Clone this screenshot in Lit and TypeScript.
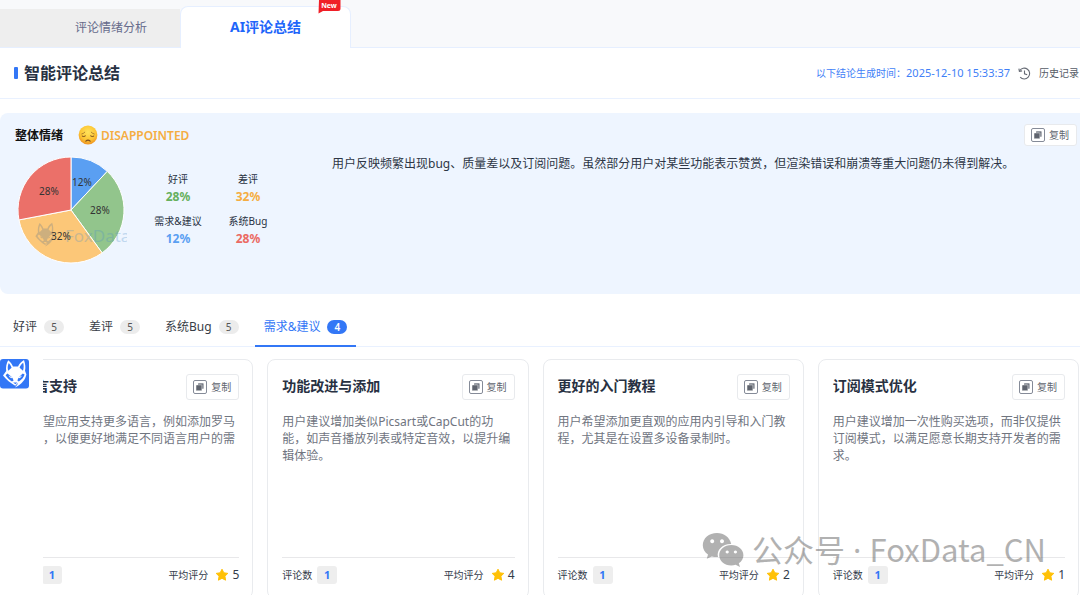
import { LitElement, html, css, svg } from "lit";
import { customElement, property, state } from "lit/decorators.js";

interface Slice {
  label: string;
  percent: number;
  fill: string;
  tone: string;
  x: number;
  y: number;
}

interface Review {
  title: string;
  body: string;
  count: number;
  score: number;
}

const SLICES: Slice[] = [
  { label: "需求&建议", percent: 12, fill: "#5a9ff2", tone: "blue", x: 64, y: 30 },
  { label: "好评", percent: 28, fill: "#92c58c", tone: "green", x: 82, y: 58 },
  { label: "差评", percent: 32, fill: "#fcc778", tone: "orange", x: 43, y: 84 },
  { label: "系统Bug", percent: 28, fill: "#eb7069", tone: "red", x: 31, y: 39 },
];

const LEGEND = [SLICES[1], SLICES[2], SLICES[0], SLICES[3]];

const TABS = [
  { label: "好评", count: 5 },
  { label: "差评", count: 5 },
  { label: "系统Bug", count: 5 },
  { label: "需求&建议", count: 4 },
];

const REVIEWS: Review[] = [
  {
    title: "多语言支持",
    body: "用户希望应用支持更多语言，例如添加罗马尼亚语，以便更好地满足不同语言用户的需求。",
    count: 1,
    score: 5,
  },
  {
    title: "功能改进与添加",
    body: "用户建议增加类似Picsart或CapCut的功能，如声音播放列表或特定音效，以提升编辑体验。",
    count: 1,
    score: 4,
  },
  {
    title: "更好的入门教程",
    body: "用户希望添加更直观的应用内引导和入门教程，尤其是在设置多设备录制时。",
    count: 1,
    score: 2,
  },
  {
    title: "订阅模式优化",
    body: "用户建议增加一次性购买选项，而非仅提供订阅模式，以满足愿意长期支持开发者的需求。",
    count: 1,
    score: 1,
  },
];

const foxShape = svg`
  <path fill-rule="evenodd" d="M8.2 1.2 C10.6 3.2 12.2 5.3 13 7.6 L18 7.6 C19 5 21 2.8 24 1
    C25.4 5 25.8 8.6 25 11.8 L26.4 15.6 C25.4 20.6 22 25.2 15 28.6 C16.4 26.9 17.6 25.6 18.2 23.8
    L15.2 26.8 C10.4 24 6.4 20.8 3 16.6 L6.2 12 C5.6 8.4 6.4 4.4 8.2 1.2 Z
    M8.8 4 C7.6 6.8 7.5 9.4 8.2 11.8 L11.6 8.8 C11 7 10 5.4 8.8 4 Z
    M23.2 3.8 C21.4 5.2 20.2 6.8 19.6 8.8 L23 11.8 C23.9 9.2 23.9 6.4 23.2 3.8 Z
    M5.6 16.2 C7.2 18.8 9.4 20.8 12 22.4 L13.6 21.4 C12.8 18.6 10 16.6 7.4 14.6 Z
    M24.6 15.4 L22.8 14.4 C20.6 16.4 18 18.6 17.4 21.4 L18.8 22.4 C21.6 20.6 23.8 18.4 24.6 15.4 Z
    M13.2 23.4 L15.4 25.2 L17.4 23.4 Z"></path>
  <path d="M8.6 16.6 L12.4 18.4 L11.4 19.3 Q9.4 18.6 8.6 16.6 Z M22 16.6 L18.4 18.4 L19.4 19.3 Q21.2 18.6 22 16.6 Z"></path>`;

@customElement("copy-button")
class CopyButton extends LitElement {
  @property({ type: Boolean, reflect: true }) compact = false;

  static styles = css`
    :host {
      display: block;
      flex: none;
    }
    .copy {
      box-sizing: border-box;
      display: flex;
      align-items: center;
      gap: 4px;
      height: 26px;
      padding: 0 7px 0 6px;
      border: 1px solid #e8eaed;
      border-radius: 3px;
      background: #fff;
      color: #61666f;
      font: 10px/16px "Noto Sans", "Noto Sans CJK SC", sans-serif;
      cursor: pointer;
    }
    :host([compact]) .copy {
      height: 22px;
    }
    .icon {
      display: block;
      width: 14px;
      height: 14px;
    }
  `;

  render() {
    return html`<button class="copy" type="button">
      <svg class="icon" viewBox="0 0 14 14" aria-hidden="true">
        <rect x="0.5" y="0.5" width="13" height="13" rx="1.5" fill="#fff" stroke="#858b98"></rect>
        <rect x="5" y="3.2" width="5.6" height="5.6" rx="0.6" fill="#767b85"></rect>
        <rect x="3" y="4.9" width="5.9" height="5.9" rx="0.6" fill="#5f646e" stroke="#fff" stroke-width="0.5"></rect>
      </svg>
      <span>复制</span>
    </button>`;
  }
}

@customElement("sentiment-pie")
class SentimentPie extends LitElement {
  static styles = css`
    :host {
      display: block;
      flex: none;
    }
    .pie {
      display: block;
      width: 109px;
      height: 110px;
    }
    .value {
      fill: #333;
      font: 10px "Noto Sans", sans-serif;
      text-anchor: middle;
    }
    .mark {
      fill: #4b8fc9;
      opacity: 0.28;
      font: 17px "Noto Sans", sans-serif;
    }
    .fox {
      fill: #6d7d8c;
      opacity: 0.32;
    }
  `;

  render() {
    const cx = 53;
    const cy = 54;
    const r = 53;
    let turned = 0;
    const point = (share: number) => {
      const a = share * Math.PI * 2;
      return `${(cx + r * Math.sin(a)).toFixed(2)} ${(cy - r * Math.cos(a)).toFixed(2)}`;
    };
    const wedges = SLICES.map((s) => {
      const from = point(turned);
      turned += s.percent / 100;
      return svg`<path fill=${s.fill} stroke="#fff" stroke-width="1"
        d=${`M${cx} ${cy} L${from} A${r} ${r} 0 0 1 ${point(turned)} Z`}></path>`;
    });
    return html`<svg class="pie" viewBox="0 0 109 110" role="img" aria-label="整体情绪">
      ${wedges}
      <g class="fox" transform="translate(15 66) scale(0.8 0.86)">${foxShape}</g>
      <text class="mark" x="47" y="86">FoxData</text>
      ${SLICES.map((s) => svg`<text class="value" x=${s.x} y=${s.y}>${s.percent}%</text>`)}
    </svg>`;
  }
}

@customElement("review-card")
class ReviewCard extends LitElement {
  @property({ attribute: false }) review!: Review;

  static styles = css`
    :host {
      display: block;
      min-width: 0;
    }
    .card {
      padding: 14px 13px 14px 14px;
      border: 1px solid #e9ebee;
      border-radius: 8px;
      background: #fff;
    }
    .head,
    .foot,
    .stat {
      display: flex;
      align-items: center;
    }
    .head,
    .foot {
      justify-content: space-between;
    }
    .title {
      margin: 0;
      padding-bottom: 2px;
      color: #283142;
      font-size: 14px;
      line-height: 20px;
      font-weight: 700;
    }
    .body {
      min-height: 144px;
      margin: 13px 0 0;
      color: #70757f;
      font-size: 12px;
      line-height: 17px;
    }
    .foot {
      padding-top: 8px;
      border-top: 1px solid #e8e8ea;
      color: #333b4a;
      font-size: 10px;
      line-height: 18px;
    }
    .stat {
      gap: 5px;
    }
    .count {
      width: 20px;
      border-radius: 3px;
      background: #eee;
      color: #3377f6;
      font-size: 11px;
      font-weight: 700;
      text-align: center;
    }
    .rate {
      gap: 3px;
    }
    .star {
      display: block;
      width: 14px;
      height: 14px;
      margin-left: 4px;
    }
    .score {
      font-size: 12px;
    }
  `;

  render() {
    const { title, body, count, score } = this.review;
    return html`<article class="card">
      <div class="head">
        <h3 class="title">${title}</h3>
        <copy-button></copy-button>
      </div>
      <p class="body">${body}</p>
      <div class="foot">
        <div class="stat"><span>评论数</span><span class="count">${count}</span></div>
        <div class="stat rate">
          <span>平均评分</span>
          <svg class="star" viewBox="0 0 14 14" aria-hidden="true">
            <path
              d="M7 1.2 L8.8 4.8 L12.8 5.4 L9.9 8.2 L10.6 12.2 L7 10.3 L3.4 12.2 L4.1 8.2 L1.2 5.4 L5.2 4.8 Z"
              fill="#ffc107" stroke="#ffc107" stroke-width="1" stroke-linejoin="round"></path>
          </svg>
          <span class="score">${score}</span>
        </div>
      </div>
    </article>`;
  }
}

@customElement("app-root")
class AppRoot extends LitElement {
  @state() private active = 3;

  static styles = css`
    :host {
      display: block;
      position: relative;
      height: 100vh;
      overflow: hidden;
      background: #fff;
      color: #283142;
      font: 12px/17px "Noto Sans", "Noto Sans CJK SC", sans-serif;
    }
    button {
      margin: 0;
      border: 0;
      background: none;
      color: inherit;
      font: inherit;
      cursor: pointer;
    }
    .views {
      display: flex;
      align-items: flex-end;
      height: 47px;
      border-bottom: 1px solid #e6efff;
      background: #f8f9fb;
    }
    .view {
      height: 38px;
      padding: 0 33px 2px 75px;
      background: #eee;
      color: #666b8b;
    }
    .view.current {
      position: relative;
      box-sizing: border-box;
      width: 171px;
      height: 42px;
      margin-bottom: -1px;
      padding: 0 0 2px;
      border: 1px solid #e6efff;
      border-bottom: 0;
      border-radius: 8px 8px 0 0;
      background: #fff;
      color: #1f66fa;
      font-size: 14px;
      font-weight: 700;
    }
    .fresh {
      position: absolute;
      top: -7px;
      right: 9px;
      width: 23px;
      height: 14px;
    }
    .fresh-text {
      fill: #fff;
      font: 700 7px "Noto Sans", sans-serif;
      text-anchor: middle;
    }
    .header {
      display: flex;
      align-items: center;
      justify-content: space-between;
      height: 50px;
      padding: 0 1px 0 14px;
      border-bottom: 1px solid #e9f1ff;
    }
    .heading {
      display: flex;
      align-items: center;
      gap: 6px;
      margin: 0;
      font-size: 16px;
      line-height: 24px;
    }
    .heading::before {
      content: "";
      width: 4px;
      height: 12px;
      border-radius: 1px;
      background: #3377f6;
    }
    .meta {
      display: flex;
      align-items: center;
      gap: 8px;
      color: #555b66;
      font-size: 10px;
    }
    .made {
      color: #3f7ff7;
    }
    .time {
      font-size: 11px;
    }
    .history {
      display: flex;
      align-items: center;
      gap: 8px;
      padding: 0;
    }
    .clock {
      display: block;
      width: 13px;
      height: 13px;
    }
    .summary {
      display: flex;
      align-items: flex-start;
      box-sizing: border-box;
      min-height: 181px;
      margin: 14px 0 0;
      padding: 11px 3px 16px 15px;
      border-radius: 8px 0 0 8px;
      background: #eef5ff;
    }
    .mood {
      flex: none;
      width: 317px;
    }
    .mood-head {
      display: flex;
      align-items: center;
      height: 22px;
      color: #111;
      font-weight: 700;
    }
    .emoji {
      display: block;
      width: 20px;
      height: 20px;
      margin: 0 3px 0 15px;
    }
    .verdict {
      color: #f5ad42;
      font-weight: 600;
    }
    .mood-body {
      display: flex;
      padding: 10px 0 0 3px;
    }
    .legend {
      display: grid;
      grid-template-columns: 70px 70px;
      gap: 8px 0;
      align-content: start;
      margin: 0;
      padding: 15px 0 0 16px;
      text-align: center;
    }
    .name {
      font-size: 10px;
    }
    .share {
      margin: 0;
      font-weight: 700;
    }
    .blue {
      color: #5a9ff2;
    }
    .green {
      color: #66b05e;
    }
    .orange {
      color: #f5ad42;
    }
    .red {
      color: #eb6a63;
    }
    .digest {
      flex: 1;
      margin: 31px 0 0;
      color: #2d3645;
    }
    .groups {
      display: flex;
      gap: 7px;
      height: 40px;
      padding: 12px 0 0 4px;
      border-bottom: 1px solid #e9f1ff;
    }
    .group {
      display: flex;
      align-items: center;
      gap: 7px;
      height: 41px;
      padding: 2px 9px 0;
      border-bottom: 2px solid transparent;
      box-sizing: border-box;
      color: #383d46;
    }
    .group.current {
      border-bottom-color: #3377f6;
      color: #3377f6;
    }
    .pill {
      width: 20px;
      border-radius: 7px;
      background: #ececec;
      color: #555;
      font-size: 10px;
      line-height: 14px;
      text-align: center;
    }
    .current .pill {
      background: #3377f6;
      color: #fff;
      font-weight: 600;
    }
    .board {
      position: relative;
      margin-top: 12px;
    }
    .cards {
      display: grid;
      grid-template-columns: repeat(4, minmax(0, 1fr));
      gap: 14px;
      margin: 0 1px 0 -8px;
    }
    .dock {
      position: absolute;
      top: 0;
      bottom: 0;
      left: 0;
      width: 43px;
      background: #fff;
    }
    .logo {
      display: block;
      width: 29px;
      height: 30px;
    }
    .stamp {
      position: absolute;
      right: 34px;
      bottom: 23px;
      display: flex;
      align-items: center;
      gap: 8px;
      color: #666;
      opacity: 0.5;
      font: 31px/44px "Noto Sans CJK SC", sans-serif;
      pointer-events: none;
    }
    .dot {
      font-family: "Noto Sans", sans-serif;
      white-space: pre;
    }
    .chat {
      display: block;
      width: 42px;
      height: 36px;
    }
  `;

  render() {
    return html`
      <nav class="views">
        <button class="view" type="button">评论情绪分析</button>
        <button class="view current" type="button">
          AI评论总结
          <svg class="fresh" viewBox="0 0 23 14" aria-hidden="true">
            <path d="M1 0 H22.5 V8.5 Q22.5 11 20 11 H5 L0.5 13.5 Z" fill="#f01f27"></path>
            <text class="fresh-text" x="11" y="8">New</text>
          </svg>
        </button>
      </nav>

      <header class="header">
        <h2 class="heading">智能评论总结</h2>
        <div class="meta">
          <span class="made">以下结论生成时间：<span class="time">2025-12-10 15:33:37</span></span>
          <button class="history" type="button">
            <svg class="clock" viewBox="0 0 13 13" fill="none" stroke="#656a74" stroke-width="1.1" aria-hidden="true">
              <path d="M1.6 3.8 A5.4 5.4 0 1 1 2.2 10.1"></path>
              <path d="M0.9 1.6 L1.4 4.3 L4.1 3.9"></path>
              <path d="M6.5 3.5 V6.8 L9.2 7.8"></path>
            </svg>
            <span>历史记录</span>
          </button>
        </div>
      </header>

      <section class="summary">
        <div class="mood">
          <div class="mood-head">
            <span>整体情绪</span>
            <svg class="emoji" viewBox="0 0 20 20" aria-hidden="true">
              <defs>
                <radialGradient id="skin" cx="0.5" cy="0.35" r="0.65">
                  <stop offset="0" stop-color="#ffe35c"></stop>
                  <stop offset="0.65" stop-color="#fcc433"></stop>
                  <stop offset="1" stop-color="#ee9322"></stop>
                </radialGradient>
              </defs>
              <circle cx="10" cy="10" r="9.4" fill="url(#skin)"></circle>
              <g fill="none" stroke="#7a4b1c" stroke-linecap="round">
                <path d="M3.8 9 Q5.6 8.6 6.8 7.2 M16.2 9 Q14.4 8.6 13.2 7.2" stroke-width="0.6"></path>
                <path d="M4.2 11.2 Q5.8 12.2 7.4 11 M15.8 11.2 Q14.2 12.2 12.6 11" stroke-width="1"></path>
                <path d="M7.8 16.2 Q10 14 12.2 16.2" stroke-width="1.1"></path>
              </g>
            </svg>
            <span class="verdict">DISAPPOINTED</span>
          </div>
          <div class="mood-body">
            <sentiment-pie></sentiment-pie>
            <dl class="legend">
              ${LEGEND.map(
                (s) => html`<div>
                  <dt class="name">${s.label}</dt>
                  <dd class="share ${s.tone}">${s.percent}%</dd>
                </div>`
              )}
            </dl>
          </div>
        </div>
        <p class="digest">
          用户反映频繁出现bug、质量差以及订阅问题。虽然部分用户对某些功能表示赞赏，但渲染错误和崩溃等重大问题仍未得到解决。
        </p>
        <copy-button compact></copy-button>
      </section>

      <nav class="groups">
        ${TABS.map(
          (t, i) => html`<button
            class="group ${i === this.active ? "current" : ""}"
            type="button"
            @click=${() => (this.active = i)}
          >
            <span>${t.label}</span><span class="pill">${t.count}</span>
          </button>`
        )}
      </nav>

      <section class="board">
        <div class="cards">
          ${REVIEWS.map((r) => html`<review-card .review=${r}></review-card>`)}
        </div>
        <div class="dock">
          <svg class="logo" viewBox="0 0 29 30" role="img" aria-label="FoxData">
            <rect width="29" height="29.5" rx="3" fill="#3377f6"></rect>
            <g fill="#fff">${foxShape}</g>
          </svg>
        </div>
      </section>

      <div class="stamp">
        <svg class="chat" viewBox="0 0 42 36" fill="currentColor" aria-hidden="true">
          <path fill-rule="evenodd" d="M15 1 C6.8 1 0.8 6.4 0.8 13.2 C0.8 17 2.8 20.3 6 22.5 L4.8 26.8 L9.8 24.4
            C11.8 25 14 25.2 16 25 C14.2 17.8 20.8 11.6 29.2 11.9 C27.8 5.4 22 1 15 1 Z
            M10.2 7.2 a2 2 0 1 0 0.01 0 Z M20 7.2 a2 2 0 1 0 0.01 0 Z"></path>
          <path fill-rule="evenodd" d="M29.3 13 C22.4 13 17.2 17.5 17.2 23.2 C17.2 29 22.4 33.4 29.3 33.4
            C30.8 33.4 32.3 33.2 33.6 32.8 L38 35 L36.8 31.2 C39.7 29.3 41.4 26.4 41.4 23.2
            C41.4 17.5 36.2 13 29.3 13 Z
            M25.2 18.4 a1.6 1.6 0 1 0 0.01 0 Z M33.4 18.4 a1.6 1.6 0 1 0 0.01 0 Z"></path>
        </svg>
        <span>公众号<span class="dot"> · </span>FoxData_CN</span>
      </div>
    `;
  }
}
